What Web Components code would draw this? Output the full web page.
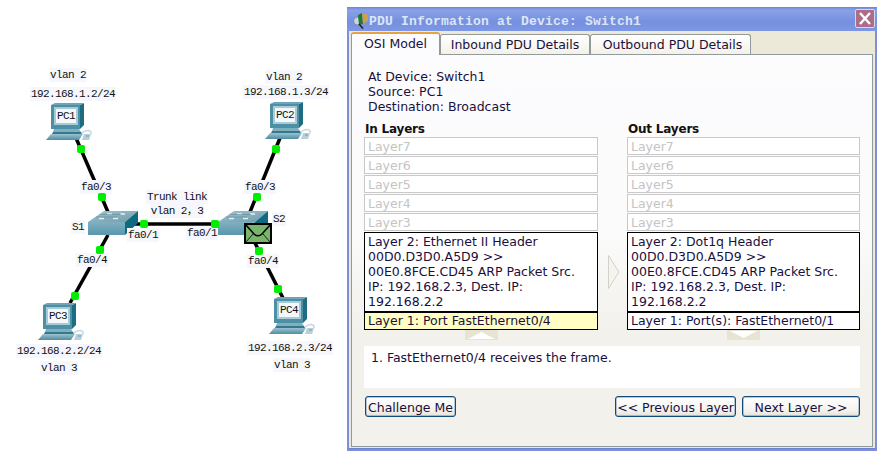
<!DOCTYPE html>
<html>
<head>
<meta charset="utf-8">
<title>PDU Information</title>
<style>
  body { margin: 0; background: #fff; }
</style>
</head>
<body>
<pt-workspace>
  <topo-canvas slot="canvas"></topo-canvas>
  <pdu-window slot="window" device="Switch1">
    <pdu-tabs></pdu-tabs>
    <osi-panel></osi-panel>
  </pdu-window>
</pt-workspace>

<script>
const MONO = `"Liberation Mono", "Noto Sans CJK SC", monospace`;
const UI = `"DejaVu Sans", Verdana, sans-serif`;

class PtWorkspace extends HTMLElement {
    constructor() {
        super();
        this.attachShadow({ mode: "open" });
        this.shadowRoot.innerHTML = `
        <style>
            :host { display: flex; width: 884px; height: 458px; align-items: flex-start; }
        </style>
        <slot name="canvas"></slot>
        <slot name="window"></slot>`;
    }
}

class NetLabel extends HTMLElement {
    constructor() {
        super();
        this.attachShadow({ mode: "open" });
        this.shadowRoot.innerHTML = `
        <style>
            :host {
                position: absolute;
                transform: translate(-50%, -50%);
                background: #f5f7fc;
                color: #111;
                font: 11px/14px ${MONO};
                letter-spacing: -0.6px;
                white-space: nowrap;
                padding: 0 1px;
            }
        </style>
        <slot></slot>`;
    }
    connectedCallback() {
        this.style.left = this.getAttribute("x") + "px";
        this.style.top = this.getAttribute("y") + "px";
    }
}

class NetPc extends HTMLElement {
    constructor() {
        super();
        this.attachShadow({ mode: "open" });
    }
    connectedCallback() {
        const name = this.getAttribute("name");
        const id = "g" + name;
        this.style.left = this.getAttribute("x") + "px";
        this.style.top = this.getAttribute("y") + "px";
        this.shadowRoot.innerHTML = `
        <style>
            :host { position: absolute; width: 46px; height: 37px; }
            svg { display: block; }
            text { font: 11px ${MONO}; letter-spacing: -0.6px; fill: #111; }
        </style>
        <svg width="46" height="37" viewBox="0 0 46 37">
            <defs>
                <linearGradient id="${id}" x1="0" x2="0" y1="0" y2="1">
                    <stop offset="0" stop-color="#9cc3d0"/>
                    <stop offset="1" stop-color="#4f8ca2"/>
                </linearGradient>
            </defs>
            <polygon points="34,2 38,0 38,22 34,26" fill="#1f6c82"/>
            <polygon points="5,2 9,0 38,0 34,2" fill="#6fa3b5"/>
            <rect x="5" y="2" width="29" height="24" fill="#4d8fa5"/>
            <rect x="8" y="4" width="24" height="18" fill="#a9cbd7"/>
            <rect x="10" y="6" width="20" height="14" fill="#f4f8fa"/>
            <text x="20" y="16" text-anchor="middle">${name}</text>
            <polygon points="8,26 33,26 35,29 7,29" fill="#7fb0c0"/>
            <polygon points="7,29 35,29 36,31 6,31" fill="#35788e"/>
            <polygon points="5,31 37,31 33,37 0,37" fill="url(#${id})"/>
            <path d="M36 30 C40 26 46 27 45 31" fill="none" stroke="#c4d6dd" stroke-width="1.5"/>
            <polygon points="38,31 45,31 43,37 36,37" fill="#b9d0d9"/>
            <path d="M40 33 l3 0" stroke="#6f9cad" stroke-width="1"/>
        </svg>`;
    }
}

class NetSwitch extends HTMLElement {
    constructor() {
        super();
        this.attachShadow({ mode: "open" });
    }
    connectedCallback() {
        this.style.left = this.getAttribute("x") + "px";
        this.style.top = this.getAttribute("y") + "px";
        const gid = "sw" + this.getAttribute("x");
        this.shadowRoot.innerHTML = `
        <style>
            :host { position: absolute; width: 50px; height: 24px; }
            svg { display: block; }
        </style>
        <svg width="50" height="24" viewBox="0 0 50 24">
            <defs>
                <linearGradient id="${gid}" x1="0" x2="0" y1="0" y2="1">
                    <stop offset="0" stop-color="#7fb0c2"/>
                    <stop offset="1" stop-color="#5a96ab"/>
                </linearGradient>
                <linearGradient id="${gid}t" x1="0" x2="1" y1="0" y2="1">
                    <stop offset="0" stop-color="#a3c4cf"/>
                    <stop offset="1" stop-color="#6d9bab"/>
                </linearGradient>
            </defs>
            <polygon points="0,11 16,0 50,0 37,11" fill="url(#${gid}t)"/>
            <rect x="0" y="11" width="37" height="13" fill="url(#${gid})"/>
            <polygon points="37,11 50,0 50,12 37,24" fill="#0f6a80"/>
            <g stroke="#e6f1f4" stroke-width="1.6">
                <path d="M19 3 l5 0 M32 3 l5 0 M11 7.5 l5 0 M25 7.5 l5 0"/>
            </g>
            <path d="M12 3.5 L33 3.5 M8 6 L29 6" stroke="#5f8b9b" stroke-width="0.6"/>
        </svg>`;
    }
}

class PduEnvelope extends HTMLElement {
    constructor() {
        super();
        this.attachShadow({ mode: "open" });
        this.shadowRoot.innerHTML = `
        <style>
            :host { position: absolute; left: 244px; top: 223px; width: 28px; height: 21px; }
            svg { display: block; }
        </style>
        <svg width="28" height="21" viewBox="0 0 28 21">
            <rect x="1" y="1" width="26" height="19" fill="#78b66c" stroke="#000" stroke-width="2"/>
            <path d="M1.5 1.5 L10 11 Q14 14.5 18 11 L26.5 1.5" fill="none" stroke="#000" stroke-width="1.6"/>
            <path d="M1.5 19.5 L9 11 M26.5 19.5 L19 11" fill="none" stroke="#000" stroke-width="0.8"/>
        </svg>`;
    }
}

class TopoCanvas extends HTMLElement {
    constructor() {
        super();
        this.attachShadow({ mode: "open" });
    }
    connectedCallback() {
        const lines = [[76, 138, 108, 212], [280, 138, 250, 212], [130, 224, 226, 224], [108, 235, 70, 303], [255, 243, 283, 298]];
        const dots = [[81, 149], [102, 197], [276, 149], [257, 197], [144, 224], [215, 224], [100, 250], [75, 296], [259, 251], [278, 289]];
        const labels = [
            [68, 75, "vlan 2"], [73, 94, "192.168.1.2/24"],
            [284, 77, "vlan 2"], [286, 92, "192.168.1.3/24"],
            [96, 187, "fa0/3"], [260, 187, "fa0/3"],
            [177, 197, "Trunk link"], [177, 211, "vlan 2，3"],
            [78, 227, "S1"], [279, 219, "S2"],
            [143, 235, "fa0/1"], [202, 233, "fa0/1"],
            [92, 260, "fa0/4"], [263, 261, "fa0/4"],
            [59, 351, "192.168.2.2/24"], [59, 368, "vlan 3"],
            [290, 348, "192.168.2.3/24"], [292, 365, "vlan 3"]
        ];
        this.shadowRoot.innerHTML = `
        <style>
            :host { display: block; position: relative; width: 347px; height: 458px; flex: none; }
            svg.links { position: absolute; left: 0; top: 0; }
        </style>
        <svg class="links" width="347" height="458">
            ${lines.map(l => `<line x1="${l[0]}" y1="${l[1]}" x2="${l[2]}" y2="${l[3]}" stroke="#000" stroke-width="3.5"/>`).join("")}
        </svg>
        <net-pc name="PC1" x="46" y="103"></net-pc>
        <net-pc name="PC2" x="265" y="102"></net-pc>
        <net-pc name="PC3" x="38" y="303"></net-pc>
        <net-pc name="PC4" x="269" y="297"></net-pc>
        <net-switch x="88" y="211"></net-switch>
        <net-switch x="218" y="211"></net-switch>
        ${labels.map(l => `<net-label x="${l[0]}" y="${l[1]}">${l[2]}</net-label>`).join("")}
        <svg class="links" width="347" height="458">
            ${dots.map(d => `<rect x="${d[0] - 4}" y="${d[1] - 4}" width="8" height="8" rx="2" fill="#00ee00"/>`).join("")}
        </svg>
        <pdu-envelope></pdu-envelope>`;
    }
}

class PduWindow extends HTMLElement {
    constructor() {
        super();
        this.attachShadow({ mode: "open" });
    }
    connectedCallback() {
        const device = this.getAttribute("device");
        this.shadowRoot.innerHTML = `
        <style>
            :host {
                display: flex;
                flex-direction: column;
                flex: none;
                box-sizing: border-box;
                width: 530px;
                height: 444px;
                margin-top: 7px;
                background: #ece9d8;
                border: 2px solid #7d8fdd;
                border-top: 0;
                padding: 0 2px 2px;
                box-shadow: inset 0 -1px 0 #6f80cf;
            }
            .title {
                display: flex;
                align-items: center;
                flex: none;
                box-sizing: border-box;
                height: 24px;
                margin: 0 -4px;
                padding: 0 2px 0 6px;
                background: linear-gradient(#6b83dc, #8aa1e6 12%, #7690e0 60%, #7d97e4);
                color: #dbe6f7;
                font: bold 13px ${MONO};
                letter-spacing: 0.2px;
            }
            .title svg { flex: none; margin: 3px 1px 0 0; }
            .name { flex: 1; white-space: nowrap; padding-top: 4px; }
            .close {
                box-sizing: border-box;
                flex: none;
                width: 20px;
                height: 19px;
                margin-top: -2px;
                background: #ad6c88;
                border: 1px solid #d5d9ee;
                border-radius: 2px;
            }
            .close svg { display: block; margin: 0; }
        </style>
        <div class="title">
            <svg width="15" height="17" viewBox="0 0 15 17">
                <circle cx="4.5" cy="9" r="4" fill="#c9d3e6" stroke="#6d7a9a" stroke-width="0.8"/>
                <polygon points="5,3 9,1 10,12 6,13" fill="#1f7a36"/>
                <polygon points="9,1 15,3 15,9 10,12" fill="#c9a24a"/>
                <path d="M6 12 L10 16.5" stroke="#222" stroke-width="1.6"/>
            </svg>
            <span class="name">PDU Information at Device: ${device}</span>
            <div class="close">
                <svg width="18" height="17" viewBox="0 0 18 17">
                    <path d="M4 3 L14 14 M14 3 L4 14" stroke="#fff" stroke-width="2.4"/>
                </svg>
            </div>
        </div>
        <slot></slot>`;
    }
}

class PduTabs extends HTMLElement {
    constructor() {
        super();
        this.attachShadow({ mode: "open" });
        this.shadowRoot.innerHTML = `
        <style>
            :host {
                display: flex;
                align-items: flex-end;
                flex: none;
                height: 24px;
                font: 12.5px/15px ${UI};
                color: #1a0f3c;
                position: relative;
                z-index: 1;
                margin-bottom: -1px;
            }
            .tab {
                box-sizing: border-box;
                height: 20px;
                margin-bottom: 1px;
                padding-top: 2px;
                text-align: center;
                background: linear-gradient(#fff, #f3f1e8);
                border: 1px solid #919b9c;
                border-bottom: 0;
                border-radius: 3px 3px 0 0;
            }
            .tab.active {
                height: 23px;
                margin-bottom: 0;
                padding-top: 2px;
                background: #fcfcfe;
                border-top: 2px solid #e8a33c;
            }
        </style>
        <div class="tab active" style="width: 89px">OSI Model</div>
        <div class="tab" style="width: 150px">Inbound PDU Details</div>
        <div class="tab" style="width: 161px; padding-left: 4px">Outbound PDU Details</div>`;
    }
}

class LayerRow extends HTMLElement {
    constructor() {
        super();
        this.attachShadow({ mode: "open" });
        this.shadowRoot.innerHTML = `
        <style>
            :host {
                display: block;
                box-sizing: border-box;
                height: 18px;
                margin-bottom: 1px;
                padding: 1px 3px 0;
                border: 1px solid #c9c9c9;
                background: #fff;
                color: #c4c4c4;
                font: 12.5px/16px ${UI};
            }
            :host([active]) {
                height: auto;
                margin: 0;
                border-color: #000;
                color: #1a0f3c;
                line-height: 15px;
                padding: 1px 3px 2px;
            }
            :host([active][short]) { padding: 0 3px; height: 18px; }
            :host([highlight]) { background: #ffffc4; }
        </style>
        <slot></slot>`;
    }
}

class LayerColumn extends HTMLElement {
    constructor() {
        super();
        this.attachShadow({ mode: "open" });
    }
    connectedCallback() {
        const up = this.getAttribute("dir") === "up";
        this.shadowRoot.innerHTML = `
        <style>
            :host { display: block; }
            .head { font: bold 12px/15px ${UI}; color: #111; padding-left: 1px; height: 15px; letter-spacing: -0.2px; }
            .foot { display: flex; justify-content: center; height: 16px; }
            svg { display: block; }
        </style>
        <div class="head">${this.getAttribute("title")}</div>
        <slot></slot>
        <div class="foot">
            <svg width="33" height="10" viewBox="0 0 33 10">
                <rect width="33" height="10" fill="#e7e4d3"/>
                ${up
                    ? `<polygon points="3,9 16.5,2 30,9" fill="#fff"/>`
                    : `<polygon points="3,1 16.5,8 30,1" fill="#fff"/>`}
            </svg>
        </div>`;
    }
}

class XpButton extends HTMLElement {
    constructor() {
        super();
        this.attachShadow({ mode: "open" });
        this.shadowRoot.innerHTML = `
        <style>
            :host {
                display: block;
                box-sizing: border-box;
                height: 21px;
                border: 1px solid #144a7c;
                border-radius: 3px;
                box-shadow: inset 0 0 0 0.5px #6f8fae;
                background: linear-gradient(#fff, #f4f3ee 70%, #e4e2d8);
                color: #1a0f3c;
                font: 12.5px/21px ${UI};
                text-align: center;
                white-space: nowrap;
            }
        </style>
        <slot></slot>`;
    }
}

class OsiPanel extends HTMLElement {
    constructor() {
        super();
        this.attachShadow({ mode: "open" });
        const idle = ["Layer7", "Layer6", "Layer5", "Layer4", "Layer3"]
            .map(t => `<layer-row>${t}</layer-row>`).join("");
        this.shadowRoot.innerHTML = `
        <style>
            :host {
                display: block;
                flex: 1;
                box-sizing: border-box;
                border: 1px solid #919b9c;
                padding: 14px 12px 0;
                background: linear-gradient(#fcfcfe, #fbfbfb 45%, #f2f1ec 70%);
                color: #1a0f3c;
                font: 12.5px/15px ${UI};
            }
            .info { padding-left: 4px; height: 45px; margin-bottom: 8px; }
            .layers { display: grid; grid-template-columns: 234px 29px 233px; }
            .arrow { margin: 133px 0 0 10px; }
            .arrow svg { display: block; }
            .desc {
                box-sizing: border-box;
                width: 496px;
                height: 42px;
                margin-bottom: 8px;
                padding: 4px 7px;
                background: #fff;
            }
            .actions { display: flex; width: 495px; padding-left: 1px; }
            .actions .spacer { flex: 1; }
        </style>
        <div class="info">
            <div>At Device: Switch1</div>
            <div>Source: PC1</div>
            <div>Destination: Broadcast</div>
        </div>
        <div class="layers">
            <layer-column title="In Layers" dir="up">
                ${idle}
                <layer-row active>Layer 2: Ethernet II Header<br>00D0.D3D0.A5D9 &gt;&gt;<br>00E0.8FCE.CD45 ARP Packet Src.<br>IP: 192.168.2.3, Dest. IP:<br>192.168.2.2</layer-row>
                <layer-row active short highlight>Layer 1: Port FastEthernet0/4</layer-row>
            </layer-column>
            <div class="arrow">
                <svg width="12" height="34" viewBox="0 0 12 34">
                    <polygon points="0.5,0.5 11,17 0.5,33.5" fill="#f4f3ee" stroke="#d4d2c6"/>
                </svg>
            </div>
            <layer-column title="Out Layers" dir="down">
                ${idle}
                <layer-row active>Layer 2: Dot1q Header<br>00D0.D3D0.A5D9 &gt;&gt;<br>00E0.8FCE.CD45 ARP Packet Src.<br>IP: 192.168.2.3, Dest. IP:<br>192.168.2.2</layer-row>
                <layer-row active short>Layer 1: Port(s): FastEthernet0/1</layer-row>
            </layer-column>
        </div>
        <div class="desc">1. FastEthernet0/4 receives the frame.</div>
        <div class="actions">
            <xp-button style="width: 91px">Challenge Me</xp-button>
            <span class="spacer"></span>
            <xp-button style="width: 121px; margin-right: 6px">&lt;&lt; Previous Layer</xp-button>
            <xp-button style="width: 118px">Next Layer &gt;&gt;</xp-button>
        </div>`;
    }
}

customElements.define("pt-workspace", PtWorkspace);
customElements.define("net-label", NetLabel);
customElements.define("net-pc", NetPc);
customElements.define("net-switch", NetSwitch);
customElements.define("pdu-envelope", PduEnvelope);
customElements.define("topo-canvas", TopoCanvas);
customElements.define("pdu-window", PduWindow);
customElements.define("pdu-tabs", PduTabs);
customElements.define("layer-row", LayerRow);
customElements.define("layer-column", LayerColumn);
customElements.define("xp-button", XpButton);
customElements.define("osi-panel", OsiPanel);
</script>
</body>
</html>
